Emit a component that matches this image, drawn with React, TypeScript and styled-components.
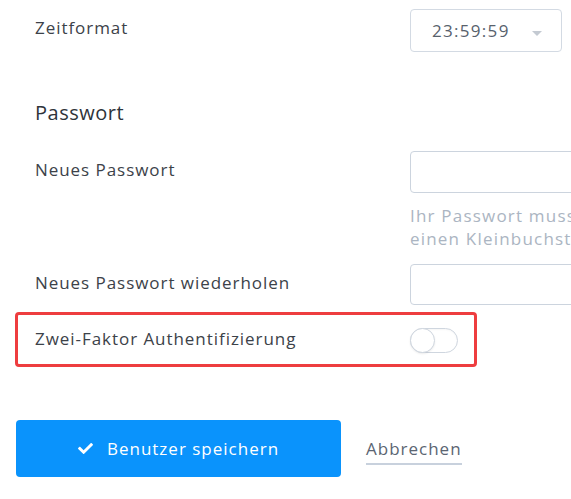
import React from "react";
import styled, { createGlobalStyle } from "styled-components";
import { FaCheck } from "react-icons/fa";

const Global = createGlobalStyle`
  html, body { margin: 0; padding: 0; background: #ffffff; }
  body { font-family: "Open Sans", Lato, "Liberation Sans", sans-serif; overflow: hidden; }
  * { box-sizing: border-box; }
`;

const Page = styled.div`
  width: 571px;
  height: 499px;
  padding: 9px 0 0 15px;
  display: flex;
  flex-direction: column;
  overflow: hidden;
`;

const Row = styled.div<{ $highlight?: boolean; $mt?: number }>`
  display: grid;
  grid-template-columns: 375px auto;
  align-items: start;
  padding: ${(p) => (p.$highlight ? "11px 16px 11px 17px" : "0 0 0 20px")};
  border: ${(p) => (p.$highlight ? "3px solid #ee3d3f" : "none")};
  border-radius: ${(p) => (p.$highlight ? "4px" : "0")};
  width: ${(p) => (p.$highlight ? "462px" : "auto")};
  margin-top: ${(p) => p.$mt ?? 0}px;
`;

const Label = styled.div<{ $pt?: number }>`
  font-size: 17px;
  line-height: 20px;
  letter-spacing: 0.95px;
  color: #3c4249;
  padding-top: ${(p) => p.$pt ?? 9}px;
  white-space: nowrap;
`;

const Heading = styled.h2`
  margin: 49px 0 0 20px;
  font-size: 20px;
  line-height: 24px;
  font-weight: 400;
  color: #2e343a;
  letter-spacing: 0.5px;
`;

const Select = styled.div`
  width: 152px;
  height: 43px;
  border: 1px solid #d3dae3;
  border-radius: 4px;
  display: flex;
  align-items: center;
  padding-left: 21px;
  font-size: 17px;
  letter-spacing: 1.3px;
  color: #58616c;
  position: relative;
`;

const Caret = styled.span`
  position: absolute;
  left: 121px;
  top: 21px;
  width: 0;
  height: 0;
  border-left: 5px solid transparent;
  border-right: 5px solid transparent;
  border-top: 5px solid #c4cad2;
`;

const Field = styled.div`
  display: flex;
  flex-direction: column;
`;

const Input = styled.div<{ $h?: number }>`
  width: 200px;
  height: ${(p) => p.$h ?? 42}px;
  border: 1px solid #ccd4de;
  border-radius: 4px;
  background: #fff;
`;

const Hint = styled.div`
  margin-top: 11px;
  font-size: 17px;
  line-height: 23px;
  letter-spacing: 1.2px;
  color: #abb5c2;
  white-space: nowrap;
`;

const Toggle = styled.div`
  width: 48px;
  height: 25px;
  margin-top: 2px;
  border: 1px solid #cfd6df;
  border-radius: 13px;
  background: #fff;
  position: relative;
  box-shadow: inset 0 1px 2px rgba(0, 0, 0, 0.04);
`;

const Knob = styled.span`
  position: absolute;
  left: -1px;
  top: -1px;
  width: 25px;
  height: 25px;
  border-radius: 50%;
  border: 1px solid #cfd6df;
  background: #fff;
  box-shadow: 0 1px 2px rgba(0, 0, 0, 0.08);
`;

const Actions = styled.div`
  display: flex;
  align-items: center;
  gap: 25px;
  margin-top: 53px;
  padding-left: 1px;
`;

const PrimaryButton = styled.button`
  width: 325px;
  height: 57px;
  border: none;
  border-radius: 4px;
  background: #0a93fc;
  color: #fff;
  font-family: inherit;
  font-size: 17px;
  letter-spacing: 1px;
  display: flex;
  align-items: center;
  justify-content: center;
  gap: 14px;
  padding: 0;
  svg { width: 15px; height: 15px; }
`;

const LinkButton = styled.a`
  font-size: 17px;
  letter-spacing: 1px;
  color: #5b6572;
  padding-bottom: 3px;
  border-bottom: 2px solid #c8d1dd;
  line-height: 22px;
  margin-top: 6px;
`;

export default function App() {
  return (
    <>
      <Global />
      <Page>
        <Row>
          <Label $pt={9}>Zeitformat</Label>
          <Select>
            23:59:59
            <Caret />
          </Select>
        </Row>
        <Heading>Passwort</Heading>
        <Row $mt={26}>
          <Label $pt={9}>Neues Passwort</Label>
          <Field>
            <Input />
            <Hint>
              Ihr Passwort muss mindestens 8 Zeichen,
              <br />
              einen Kleinbuchstaben und eine Zahl enthalten.
            </Hint>
          </Field>
        </Row>
        <Row $mt={14}>
          <Label $pt={9}>Neues Passwort wiederholen</Label>
          <Input $h={41} />
        </Row>
        <Row $highlight $mt={7}>
          <Label $pt={3}>Zwei-Faktor Authentifizierung</Label>
          <Toggle>
            <Knob />
          </Toggle>
        </Row>
        <Actions>
          <PrimaryButton>
            <FaCheck />
            Benutzer speichern
          </PrimaryButton>
          <LinkButton>Abbrechen</LinkButton>
        </Actions>
      </Page>
    </>
  );
}
